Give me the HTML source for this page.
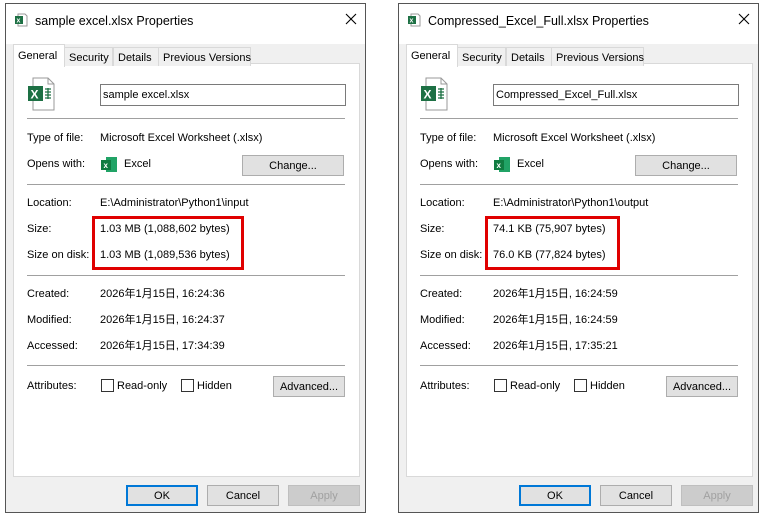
<!DOCTYPE html>
<html><head><meta charset="utf-8"><style>
body{margin:0;width:763px;height:517px;background:#fff;position:relative;overflow:hidden;font-family:"Liberation Sans","Noto Sans CJK SC",sans-serif;font-size:11px;color:#000}
.w{position:absolute;top:3px;width:361px;height:510px;border:1px solid #555;background:#f0f0f0;box-sizing:border-box}
.w *{position:absolute;box-sizing:border-box;white-space:nowrap;line-height:14px}
.tb{left:0;top:0;width:100%;height:40px;background:#fff}
.t{font-size:12.5px;top:10px;left:29px}
.x{right:8px;top:9px}
.tab{top:43px;height:19px;border:1px solid #d9d9d9;border-bottom:none;background:#f0f0f0;padding:3px 4px 0}
.tab.s{top:40px;height:23px;background:#fff;z-index:2;padding-top:4px}
.p{left:7px;top:59px;width:347px;height:414px;background:#fff;border:1px solid #d9d9d9}
.l{left:21px}.v{left:94px}
.sep{left:21px;width:318px;height:1px;background:#a0a0a0}
.btn{height:21px;border:1px solid #adadad;background:#e1e1e1;text-align:center;padding-top:3px}
.cb{width:13px;height:13px;border:1px solid #333;background:#fff}
.red{left:86px;top:212px;width:152px;height:54px;border:3px solid #e00000}
.ic{left:8px;top:9px;width:14px;height:14px}
</style></head><body>

<div class="w" style="left:5px">
<div class="tb"></div>
<svg class="ic" viewBox="0 0 14 14"><path d="M4 1h7l2 2v10H4z" fill="#fff" stroke="#999"/><rect x="1" y="3" width="8" height="8" fill="#1d7044"/><text x="2.5" y="9.5" font-size="7" fill="#fff" font-weight="bold" font-family="Liberation Sans">x</text></svg>
<div class="t">sample excel.xlsx Properties</div>
<svg class="x" width="12" height="12"><path d="M1 1L11 11M11 1L1 11" stroke="#000" stroke-width="1.1"/></svg>
<div class="p"></div>
<div class="tab s" style="left:7px;width:52px">General</div>
<div class="tab" style="left:58px;width:49px">Security</div>
<div class="tab" style="left:107px;width:46px">Details</div>
<div class="tab" style="left:152px;width:93px">Previous Versions</div>
<svg style="left:20px;top:73px" width="30" height="34" viewBox="0 0 30 34"><path d="M7 1h15l6 6v26H7z" fill="#fff" stroke="#999"/><path d="M22 1v6h6" fill="none" stroke="#999"/><rect x="2" y="9" width="15" height="15" fill="#1d7044"/><text x="4.5" y="21.5" font-size="12" fill="#fff" font-weight="bold" font-family="Liberation Sans">X</text><path d="M19 12h6M19 15h6M19 18h6M19 21h6M22 11v11" stroke="#1d7044" stroke-width="1.3"/></svg>
<div style="left:94px;top:80px;width:246px;height:22px;border:1px solid #7a7a7a;background:#fff;padding:3px 2px">sample excel.xlsx</div>
<div class="sep" style="top:114px"></div>
<div class="l" style="top:127px">Type of file:</div><div class="v" style="top:127px">Microsoft Excel Worksheet (.xlsx)</div>
<div class="l" style="top:153px">Opens with:</div>
<svg style="left:95px;top:152px" width="17" height="17"><rect x="5" y="1" width="11" height="15" fill="#21a366"/><rect x="0" y="4" width="10" height="10" fill="#107c41"/><text x="2.5" y="12" font-size="8" fill="#fff" font-weight="bold" font-family="Liberation Sans">x</text></svg>
<div style="left:118px;top:153px">Excel</div>
<div class="btn" style="left:236px;top:151px;width:102px">Change...</div>
<div class="sep" style="top:180px"></div>
<div class="l" style="top:192px">Location:</div><div class="v" style="top:192px">E:\Administrator\Python1\input</div>
<div class="l" style="top:218px">Size:</div><div class="v" style="top:218px">1.03 MB (1,088,602 bytes)</div>
<div class="l" style="top:244px">Size on disk:</div><div class="v" style="top:244px">1.03 MB (1,089,536 bytes)</div>
<div class="red"></div>
<div class="sep" style="top:271px"></div>
<div class="l" style="top:283px">Created:</div><div class="v" style="top:283px">2026年1月15日, 16:24:36</div>
<div class="l" style="top:309px">Modified:</div><div class="v" style="top:309px">2026年1月15日, 16:24:37</div>
<div class="l" style="top:335px">Accessed:</div><div class="v" style="top:335px">2026年1月15日, 17:34:39</div>
<div class="sep" style="top:361px"></div>
<div class="l" style="top:375px">Attributes:</div>
<div class="cb" style="left:95px;top:375px"></div><div style="left:111px;top:375px">Read-only</div>
<div class="cb" style="left:175px;top:375px"></div><div style="left:191px;top:375px">Hidden</div>
<div class="btn" style="left:267px;top:372px;width:72px">Advanced...</div>
<div class="btn" style="left:120px;top:481px;width:72px;border:2px solid #0078d7;padding-top:2px">OK</div>
<div class="btn" style="left:201px;top:481px;width:72px">Cancel</div>
<div class="btn" style="left:282px;top:481px;width:72px;color:#a0a0a0;border-color:#bfbfbf;background:#ccc">Apply</div>
</div>

<div class="w" style="left:398px">
<div class="tb"></div>
<svg class="ic" viewBox="0 0 14 14"><path d="M4 1h7l2 2v10H4z" fill="#fff" stroke="#999"/><rect x="1" y="3" width="8" height="8" fill="#1d7044"/><text x="2.5" y="9.5" font-size="7" fill="#fff" font-weight="bold" font-family="Liberation Sans">x</text></svg>
<div class="t">Compressed_Excel_Full.xlsx Properties</div>
<svg class="x" width="12" height="12"><path d="M1 1L11 11M11 1L1 11" stroke="#000" stroke-width="1.1"/></svg>
<div class="p"></div>
<div class="tab s" style="left:7px;width:52px">General</div>
<div class="tab" style="left:58px;width:49px">Security</div>
<div class="tab" style="left:107px;width:46px">Details</div>
<div class="tab" style="left:152px;width:93px">Previous Versions</div>
<svg style="left:20px;top:73px" width="30" height="34" viewBox="0 0 30 34"><path d="M7 1h15l6 6v26H7z" fill="#fff" stroke="#999"/><path d="M22 1v6h6" fill="none" stroke="#999"/><rect x="2" y="9" width="15" height="15" fill="#1d7044"/><text x="4.5" y="21.5" font-size="12" fill="#fff" font-weight="bold" font-family="Liberation Sans">X</text><path d="M19 12h6M19 15h6M19 18h6M19 21h6M22 11v11" stroke="#1d7044" stroke-width="1.3"/></svg>
<div style="left:94px;top:80px;width:246px;height:22px;border:1px solid #7a7a7a;background:#fff;padding:3px 2px">Compressed_Excel_Full.xlsx</div>
<div class="sep" style="top:114px"></div>
<div class="l" style="top:127px">Type of file:</div><div class="v" style="top:127px">Microsoft Excel Worksheet (.xlsx)</div>
<div class="l" style="top:153px">Opens with:</div>
<svg style="left:95px;top:152px" width="17" height="17"><rect x="5" y="1" width="11" height="15" fill="#21a366"/><rect x="0" y="4" width="10" height="10" fill="#107c41"/><text x="2.5" y="12" font-size="8" fill="#fff" font-weight="bold" font-family="Liberation Sans">x</text></svg>
<div style="left:118px;top:153px">Excel</div>
<div class="btn" style="left:236px;top:151px;width:102px">Change...</div>
<div class="sep" style="top:180px"></div>
<div class="l" style="top:192px">Location:</div><div class="v" style="top:192px">E:\Administrator\Python1\output</div>
<div class="l" style="top:218px">Size:</div><div class="v" style="top:218px">74.1 KB (75,907 bytes)</div>
<div class="l" style="top:244px">Size on disk:</div><div class="v" style="top:244px">76.0 KB (77,824 bytes)</div>
<div class="red" style="width:135px"></div>
<div class="sep" style="top:271px"></div>
<div class="l" style="top:283px">Created:</div><div class="v" style="top:283px">2026年1月15日, 16:24:59</div>
<div class="l" style="top:309px">Modified:</div><div class="v" style="top:309px">2026年1月15日, 16:24:59</div>
<div class="l" style="top:335px">Accessed:</div><div class="v" style="top:335px">2026年1月15日, 17:35:21</div>
<div class="sep" style="top:361px"></div>
<div class="l" style="top:375px">Attributes:</div>
<div class="cb" style="left:95px;top:375px"></div><div style="left:111px;top:375px">Read-only</div>
<div class="cb" style="left:175px;top:375px"></div><div style="left:191px;top:375px">Hidden</div>
<div class="btn" style="left:267px;top:372px;width:72px">Advanced...</div>
<div class="btn" style="left:120px;top:481px;width:72px;border:2px solid #0078d7;padding-top:2px">OK</div>
<div class="btn" style="left:201px;top:481px;width:72px">Cancel</div>
<div class="btn" style="left:282px;top:481px;width:72px;color:#a0a0a0;border-color:#bfbfbf;background:#ccc">Apply</div>
</div>
</body></html>
